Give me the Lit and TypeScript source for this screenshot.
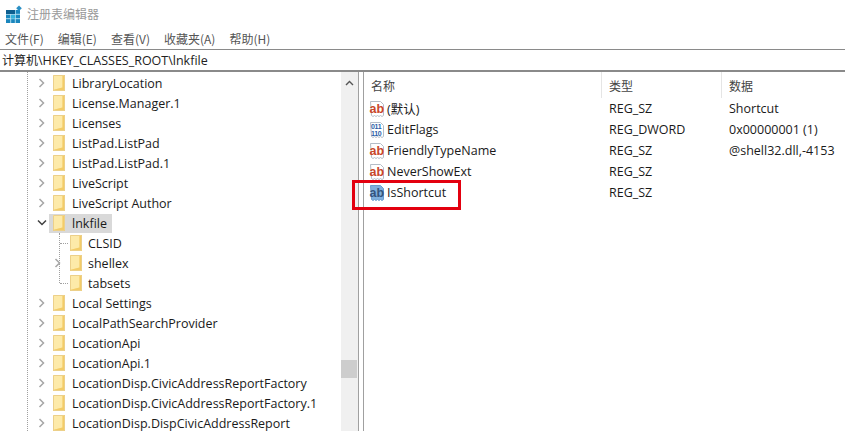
import { LitElement, html, css, svg } from "lit";
import { customElement } from "lit/decorators.js";

const folder = svg`<svg class="folder" width="14" height="18" viewBox="0 0 14 18">
  <path d="M1 1h12v16H1z" fill="#f9dc88"/>
  <path d="M1 1h9.500v12.500L1 16z" fill="#fdeaa9"/>
  <path d="M10.500 1H13v16H1v-1l9.500-2.500z" fill="#f3cc68"/>
  <path d="M1.500 1.500h11v15h-11z" fill="none" stroke="#ecd08a" stroke-width="1"/>
</svg>`;

const chevR = svg`<svg class="chev" width="8" height="10" viewBox="0 0 8 10"><path d="M1.500 1l4 4-4 4" fill="none" stroke="#a6a6a6" stroke-width="1.500"/></svg>`;
const chevD = svg`<svg class="chev" width="10" height="8" viewBox="0 0 10 8"><path d="M1 1.500l4 4 4-4" fill="none" stroke="#404040" stroke-width="1.500"/></svg>`;

function regIcon(kind: "sz" | "bin" | "sel") {
  const sel = kind === "sel";
  const page = svg`<path d="M1.500 .5h10l3 3v11l-1.500 1-1.500-1-1.500 1-1.500-1-1.500 1-1.500-1-1.500 1-1.500-1z" fill="${sel ? "#7fb0de" : "#fff"}" stroke="${sel ? "#6a9dcd" : "#b4bcc6"}"/>`;
  const content =
    kind === "bin"
      ? svg`<text x="2" y="7" font-size="7" font-weight="700" font-family="Liberation Sans" letter-spacing="-.3" fill="#2a5ea8">011</text><text x="2" y="13.500" font-size="7" font-weight="700" font-family="Liberation Sans" letter-spacing="-.3" fill="#2a5ea8">110</text>`
      : svg`<text x=".6" y="11.500" font-size="12.500" font-weight="700" font-family="Liberation Sans" fill="${sel ? "#34557f" : "#c9472b"}">ab</text>`;
  return svg`<svg class="reg" width="17" height="16" viewBox="0 0 17 16">${page}${content}</svg>`;
}

const upper = ["LibraryLocation", "License.Manager.1", "Licenses", "ListPad.ListPad", "ListPad.ListPad.1", "LiveScript", "LiveScript Author"];
const lower = ["Local Settings", "LocalPathSearchProvider", "LocationApi", "LocationApi.1", "LocationDisp.CivicAddressReportFactory", "LocationDisp.CivicAddressReportFactory.1", "LocationDisp.DispCivicAddressReport"];

const values: [string, "sz" | "bin", string, string][] = [
  ["(默认)", "sz", "REG_SZ", "Shortcut"],
  ["EditFlags", "bin", "REG_DWORD", "0x00000001 (1)"],
  ["FriendlyTypeName", "sz", "REG_SZ", "@shell32.dll,-4153"],
  ["NeverShowExt", "sz", "REG_SZ", ""],
];

@customElement("app-root")
export class AppRoot extends LitElement {
  static styles = css`
    :host {
      display: block;
      width: 845px;
      height: 431px;
      overflow: hidden;
      background: #fff;
      color: #1a1a1a;
      font-family: "Open Sans", "Noto Sans CJK SC", sans-serif;
      font-size: 12.5px;
      position: relative;
    }
    .title {
      height: 27px;
      display: flex;
      align-items: center;
      gap: 4px;
      padding-left: 5px;
      color: #9a9a9a;
      font-size: 12px;
      font-family: "Noto Sans CJK SC", sans-serif;
    }
    .menu {
      height: 22px;
      display: flex;
      align-items: center;
      padding-left: 5px;
      gap: 14px;
      font-size: 12px;
      color: #555;
      font-family: "Noto Sans CJK SC", sans-serif;
    }
    .addr {
      height: 20px;
      border-top: 1px solid #8a8a8a;
      border-bottom: 2px solid #8a8a8a;
      display: flex;
      align-items: center;
      padding-left: 2px;
      font-size: 12.5px;
      color: #222;
      white-space: nowrap;
    }
    .addr .cjk {
      font-size: 12px;
    }
    .body {
      display: grid;
      grid-template-columns: 341px 17px 1px 4px 1px 1fr;
      height: 359px;
    }
    .tree {
      position: relative;
      overflow: hidden;
      padding-top: 1px;
    }
    .vdots {
      position: absolute;
      left: 27px;
      top: 0;
      bottom: 0;
      border-left: 1px dotted #a0a0a0;
    }
    .vdots2 {
      position: absolute;
      left: 59px;
      top: 161px;
      height: 50px;
      border-left: 1px dotted #a0a0a0;
    }
    .row {
      height: 20px;
      display: flex;
      align-items: center;
      white-space: nowrap;
      position: relative;
    }
    .slot {
      width: 10px;
      display: flex;
      justify-content: center;
      align-items: center;
      flex: none;
    }
    .top {
      padding-left: 37px;
    }
    .top .slot {
      margin-right: 5px;
    }
    .top .folder {
      margin-right: 6px;
      flex: none;
    }
    .child {
      padding-left: 53px;
    }
    .child .slot {
      margin-right: 6px;
    }
    .child .folder {
      margin-right: 5px;
      flex: none;
    }
    .hd {
      position: absolute;
      left: 60px;
      width: 8px;
      border-top: 1px dotted #a0a0a0;
      top: 10px;
    }
    .sel {
      display: flex;
      align-items: center;
      height: 19px;
      padding: 0 5px 0 3px;
      margin-left: -3px;
      background: #d9d9d9;
    }
    .scroll {
      background: #f0f0f0;
      position: relative;
    }
    .up {
      position: absolute;
      left: 4px;
      top: 8px;
    }
    .thumb {
      position: absolute;
      left: 0;
      width: 16px;
      top: 288px;
      height: 18px;
      background: #cdcdcd;
    }
    .line {
      background: #a0a0a0;
    }
    .gapc {
      background: #fff;
    }
    .right {
      position: relative;
    }
    .grid {
      display: grid;
      grid-template-columns: 238px 120px 1fr;
    }
    .th {
      height: 26px;
      display: flex;
      align-items: center;
      padding-left: 7px;
      color: #444;
      font-size: 12px;
      font-family: "Noto Sans CJK SC", sans-serif;
      border-right: 1px solid #e5e5e5;
      box-sizing: border-box;
    }
    .th.last {
      border-right: none;
    }
    .cell {
      height: 21px;
      display: flex;
      align-items: center;
      padding-left: 7px;
      white-space: nowrap;
      gap: 1px;
    }
    .cell.name {
      padding-left: 5px;
    }
    .mark {
      position: absolute;
      left: -12px;
      top: 108px;
      width: 109px;
      height: 30px;
      border: 3px solid #e3000f;
      box-sizing: border-box;
    }
  `;

  private topRow(name: string) {
    return html`<div class="row top"><span class="slot">${chevR}</span>${folder}<span>${name}</span></div>`;
  }

  render() {
    return html`
      <div class="title">
        <svg width="18" height="18" viewBox="0 0 18 18">
          <rect x="1" y="5" width="14" height="13" fill="#1a86bd" />
          <path d="M1 9.300h14M1 13.700h14M5.700 5v13M10.300 5v13" stroke="#bfe6f5" stroke-width=".9" />
          <rect x="1" y="5" width="9" height="4" fill="#0f5f8f" />
          <rect x="6" y="10" width="4" height="3.500" fill="#36b4dc" />
          <path d="M14 0l2.800 2.800L14 5.600l-2.800-2.800z" transform="translate(0 .5)" fill="#2a8fc4" />
        </svg>
        <span>注册表编辑器</span>
      </div>
      <div class="menu">
        <span>文件(F)</span><span>编辑(E)</span><span>查看(V)</span><span>收藏夹(A)</span><span>帮助(H)</span>
      </div>
      <div class="addr"><span class="cjk">计算机</span>\\HKEY_CLASSES_ROOT\\lnkfile</div>
      <div class="body">
        <div class="tree">
          <div class="vdots"></div>
          <div class="vdots2"></div>
          ${upper.map((n) => this.topRow(n))}
          <div class="row top">
            <span class="slot">${chevD}</span>
            <span class="sel">${folder}<span>lnkfile</span></span>
          </div>
          <div class="row child"><span class="hd"></span><span class="slot"></span>${folder}<span>CLSID</span></div>
          <div class="row child"><span class="slot">${chevR}</span>${folder}<span>shellex</span></div>
          <div class="row child"><span class="hd"></span><span class="slot"></span>${folder}<span>tabsets</span></div>
          ${lower.map((n) => this.topRow(n))}
        </div>
        <div class="scroll">
          <svg class="up" width="9" height="6" viewBox="0 0 9 6"><path d="M1 5l3.500-3.500L8 5" fill="none" stroke="#555" stroke-width="1.400" /></svg>
          <div class="thumb"></div>
        </div>
        <div class="line"></div>
        <div class="gapc"></div>
        <div class="line"></div>
        <div class="right">
          <div class="grid">
            <div class="th">名称</div>
            <div class="th">类型</div>
            <div class="th last">数据</div>
            ${values.map(
              ([n, k, t, d]) => html`
                <div class="cell name">${regIcon(k)}<span>${n}</span></div>
                <div class="cell">${t}</div>
                <div class="cell">${d}</div>
              `
            )}
            <div class="cell name">${regIcon("sel")}<span>IsShortcut</span></div>
            <div class="cell">REG_SZ</div>
            <div class="cell"></div>
          </div>
          <div class="mark"></div>
        </div>
      </div>
    `;
  }
}
